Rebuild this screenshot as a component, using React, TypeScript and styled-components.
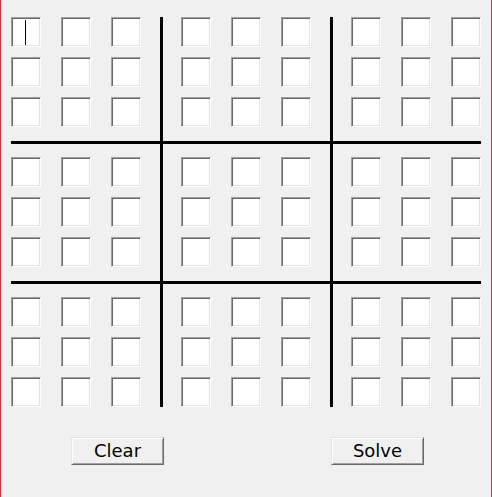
import React from "react";
import styled, { createGlobalStyle } from "styled-components";

const Global = createGlobalStyle`
  html, body { margin: 0; padding: 0; background: #f0f0f0; }
  body { font-family: "DejaVu Sans", Verdana, sans-serif; }
`;

const Window = styled.div`
  box-sizing: border-box;
  width: 492px;
  height: 497px;
  background: #f0f0f0;
  border-left: 1px solid #e4303c;
  border-right: 1px solid #e4303c;
  padding: 17px 0 0 10px;
  display: flex;
  flex-direction: column;
`;

const Board = styled.div`
  display: grid;
  grid-template-columns: 130px 19px 3px 18px 130px 19px 3px 18px 130px;
  grid-template-rows: 110px 14px 3px 13px 110px 14px 3px 13px 110px;
`;

const Block = styled.div<{ $col: number; $row: number }>`
  grid-column: ${(p) => p.$col};
  grid-row: ${(p) => p.$row};
  display: grid;
  grid-template-columns: repeat(3, 30px);
  grid-template-rows: repeat(3, 30px);
  column-gap: 20px;
  row-gap: 10px;
`;

const VLine = styled.div<{ $col: number }>`
  grid-column: ${(p) => p.$col};
  grid-row: 1 / -1;
  background: #000;
`;

const HLine = styled.div<{ $row: number }>`
  grid-row: ${(p) => p.$row};
  grid-column: 1 / -1;
  background: #000;
`;

const CellWrap = styled.div`
  position: relative;
  width: 30px;
  height: 30px;
`;

const Entry = styled.input`
  box-sizing: border-box;
  width: 30px;
  height: 30px;
  margin: 0;
  padding: 0;
  background: #fff;
  border: 1px solid;
  border-color: #a0a0a0 #ffffff #ffffff #a0a0a0;
  box-shadow: inset 1px 1px 0 #696969, inset -1px -1px 0 #e3e3e3;
  outline: none;
  text-align: center;
  font-family: "DejaVu Sans", sans-serif;
  font-size: 16px;
  caret-color: transparent;
`;

const Caret = styled.span`
  position: absolute;
  left: 14px;
  top: 3px;
  width: 1px;
  height: 25px;
  background: #000;
  pointer-events: none;
`;

const Footer = styled.div`
  display: flex;
  gap: 167px;
  padding-left: 60px;
  margin-top: 30px;
`;

const Button = styled.button`
  box-sizing: border-box;
  width: 93px;
  height: 28px;
  margin: 0;
  padding: 0;
  background: #f0f0f0;
  border: 1px solid;
  border-color: #e3e3e3 #696969 #696969 #e3e3e3;
  box-shadow: inset 1px 1px 0 #ffffff, inset -1px -1px 0 #a0a0a0;
  font-family: "DejaVu Sans", Verdana, sans-serif;
  font-size: 18px;
  color: #000;
  line-height: 26px;
`;

const blockCols = [1, 5, 9];
const blockRows = [1, 5, 9];

export default function App() {
  return (
    <>
      <Global />
      <Window>
        <Board>
          {blockRows.map((r, bi) =>
            blockCols.map((c, bj) => (
              <Block key={`${bi}-${bj}`} $col={c} $row={r}>
                {Array.from({ length: 9 }).map((_, k) => (
                  <CellWrap key={k}>
                    <Entry type="text" maxLength={1} />
                    {bi === 0 && bj === 0 && k === 0 && <Caret />}
                  </CellWrap>
                ))}
              </Block>
            ))
          )}
          <VLine $col={3} />
          <VLine $col={7} />
          <HLine $row={3} />
          <HLine $row={7} />
        </Board>
        <Footer>
          <Button>Clear</Button>
          <Button>Solve</Button>
        </Footer>
      </Window>
    </>
  );
}
